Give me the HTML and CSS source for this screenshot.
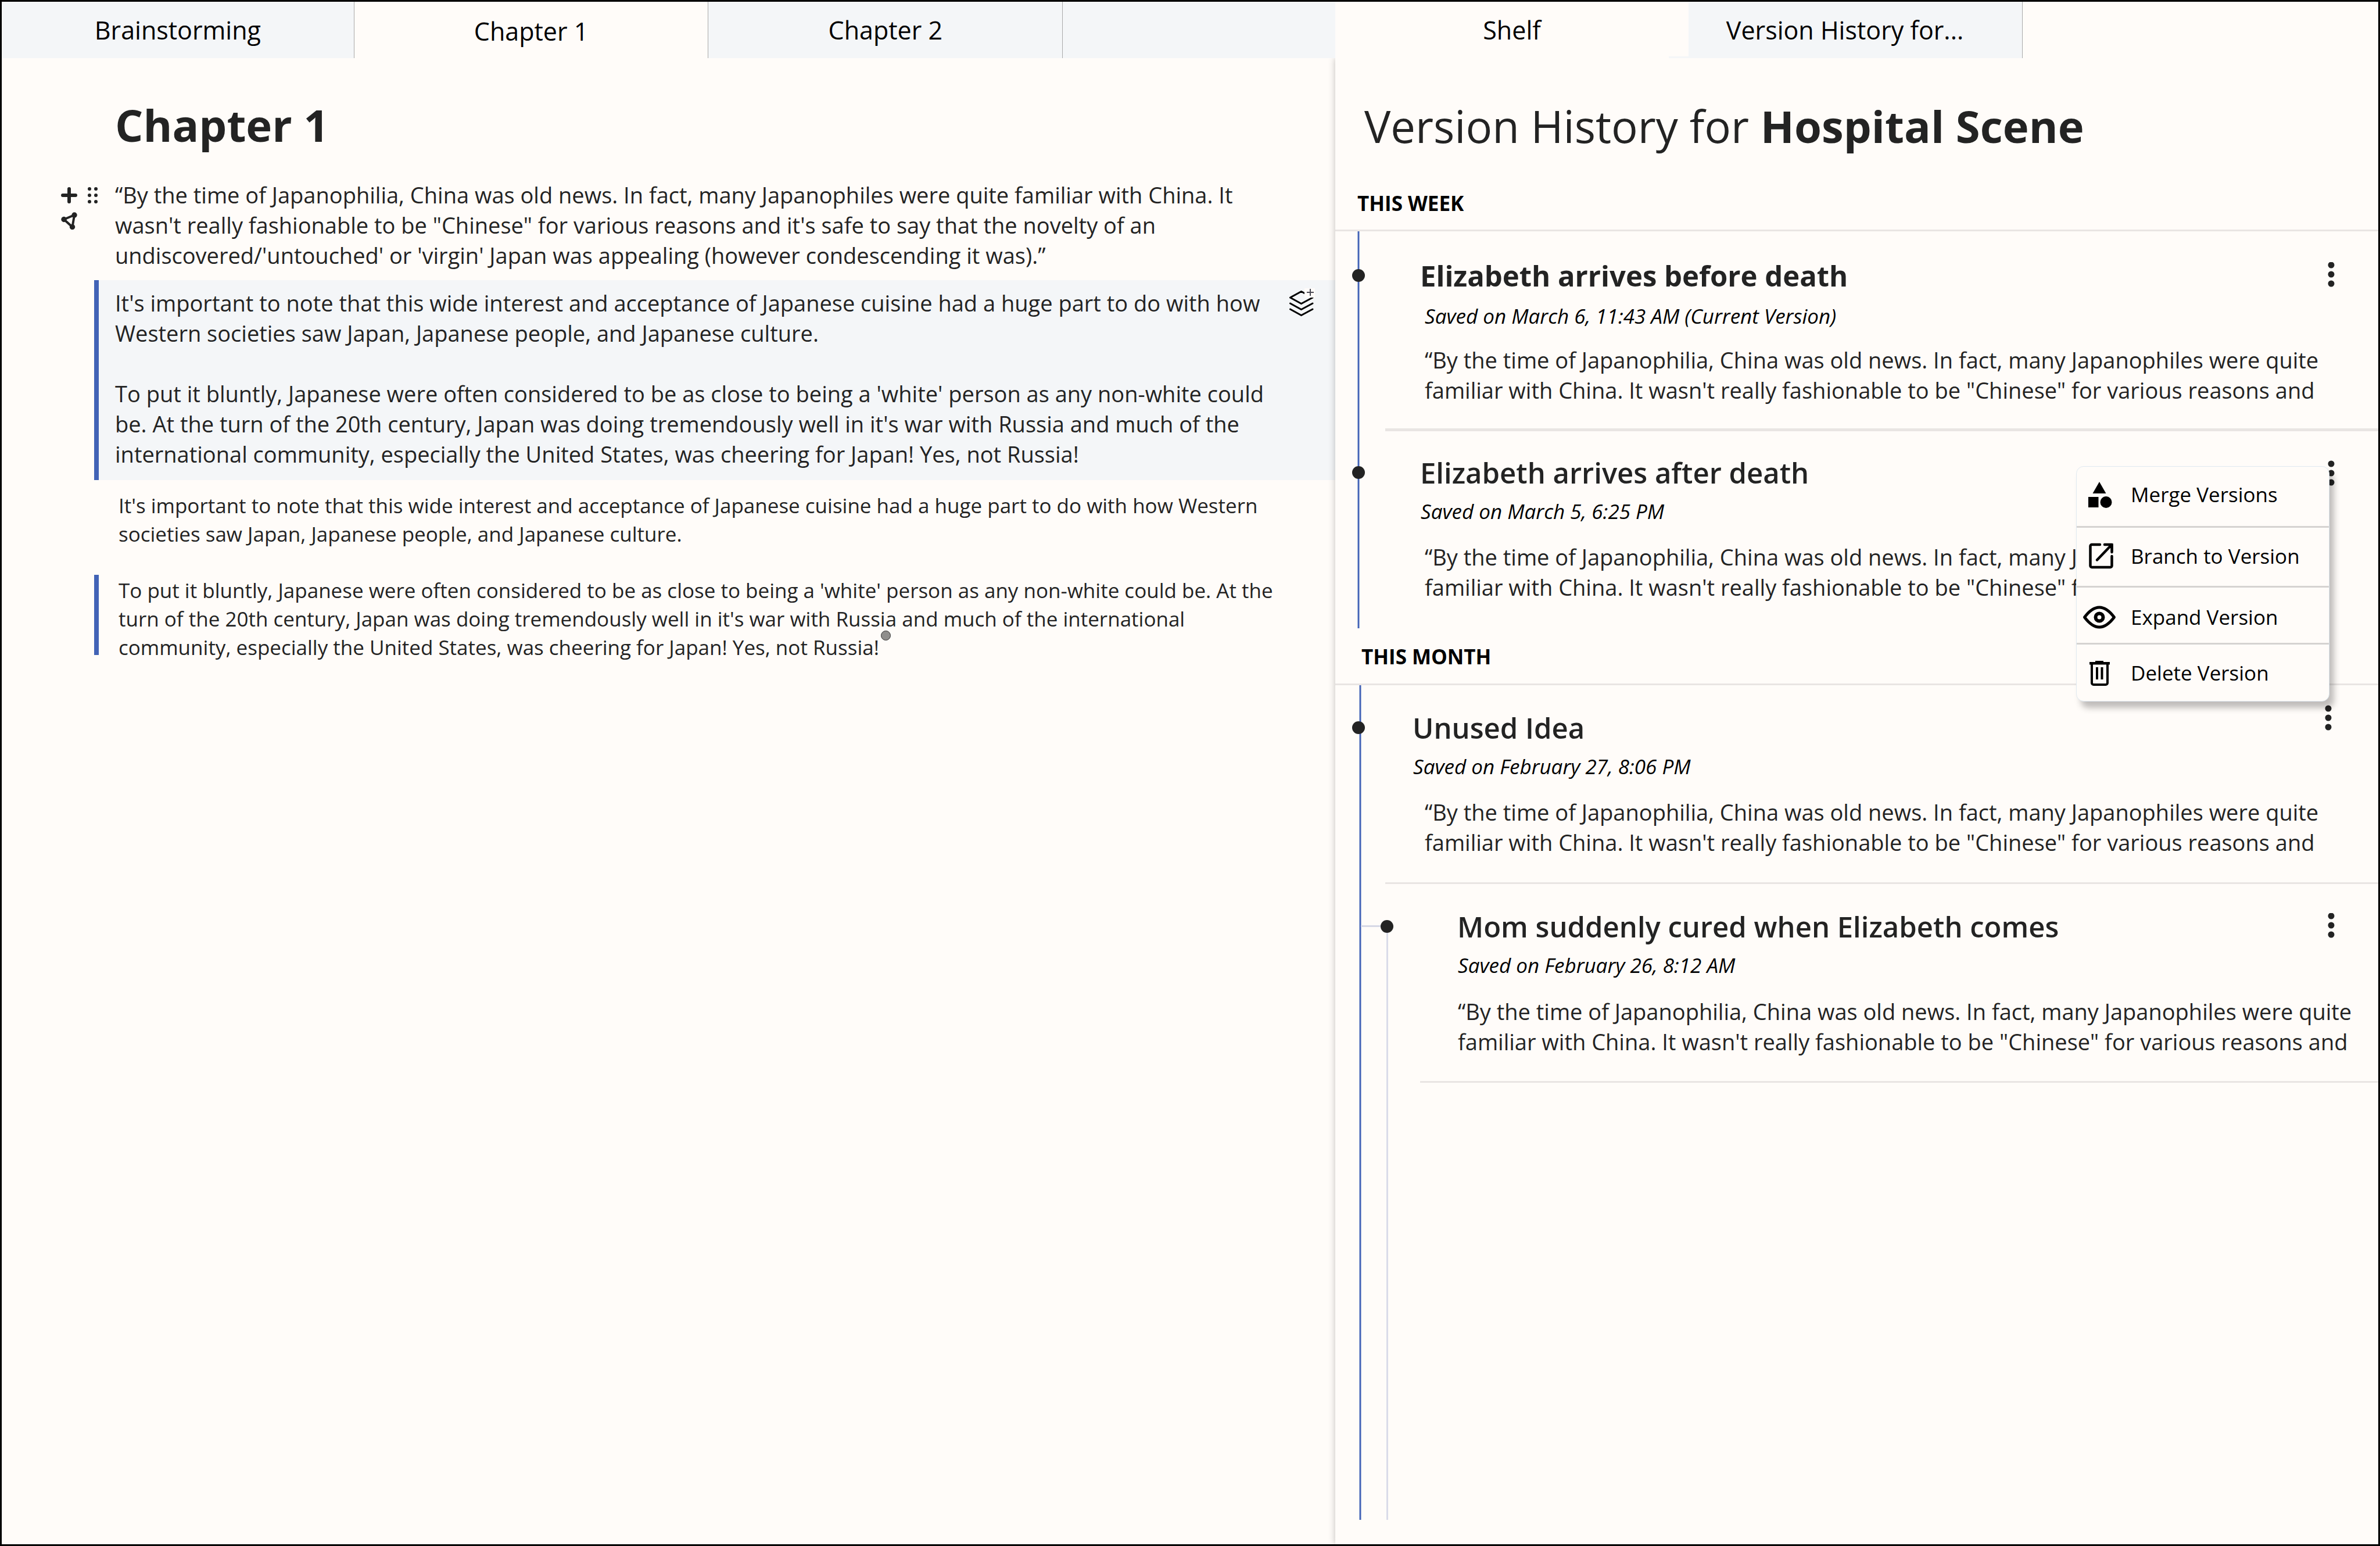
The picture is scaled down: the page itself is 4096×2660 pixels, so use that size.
FILE: index.html
```html
<!DOCTYPE html>
<html lang="en">
<head>
<meta charset="utf-8">
<meta name="viewport" content="width=device-width, initial-scale=1">
<title>Chapter 1</title>
<link rel="stylesheet" href="styles.css">
</head>
<body>
<div class="app">
  <main class="pane">
    <nav class="tabs" aria-label="Documents">
      <button class="tab tab-first" type="button">Brainstorming</button>
      <button class="tab tab-active" type="button">Chapter 1</button>
      <button class="tab" type="button">Chapter 2</button>
      <span class="tabs-rest"></span>
    </nav>
    <article class="editor">
      <h1 class="heading editor-heading">Chapter 1</h1>
      <div class="block">
        <div class="gutter">
          <div class="gutter-row">
            <button class="icon-button" type="button" aria-label="Add block">
              <svg width="28" height="28" viewBox="0 0 28 28"><path d="M14 3v22M3 14h22" stroke="#232323" stroke-width="6" stroke-linecap="round"/></svg>
            </button>
            <button class="icon-button" type="button" aria-label="Drag block">
              <svg width="18" height="28" viewBox="0 0 18 28" fill="#232323"><circle cx="3" cy="3" r="3"/><circle cx="14" cy="3" r="3"/><circle cx="3" cy="14" r="3"/><circle cx="14" cy="14" r="3"/><circle cx="3" cy="25" r="3"/><circle cx="14" cy="25" r="3"/></svg>
            </button>
          </div>
          <button class="icon-button" type="button" aria-label="Show branches">
            <svg width="28" height="30" viewBox="0 0 28 30" fill="#232323"><path d="M5 12.500 23 5 19.500 25.500Z" fill="none" stroke="#232323" stroke-width="4"/><circle cx="5" cy="12.500" r="4.700"/><circle cx="23" cy="5" r="4.700"/><circle cx="19.500" cy="25.500" r="4.700"/></svg>
          </button>
        </div>
        <p class="text">“By the time of Japanophilia, China was old news. In fact, many Japanophiles were quite familiar with China. It wasn't really fashionable to be "Chinese" for various reasons and it's safe to say that the novelty of an undiscovered/'untouched' or 'virgin' Japan was appealing (however condescending it was).”</p>
      </div>
      <section class="scene">
        <div>
          <p class="text">It's important to note that this wide interest and acceptance of Japanese cuisine had a huge part to do with how Western societies saw Japan, Japanese people, and Japanese culture.</p>
          <p class="text text-next">To put it bluntly, Japanese were often considered to be as close to being a 'white' person as any non-white could be. At the turn of the 20th century, Japan was doing tremendously well in it's war with Russia and much of the international community, especially the United States, was cheering for Japan! Yes, not Russia!</p>
        </div>
        <button class="icon-button scene-layers" type="button" aria-label="Add version">
          <svg width="46" height="50" viewBox="0 0 46 50"><g fill="none" stroke="#000" stroke-width="3" stroke-linecap="round" stroke-linejoin="round"><path d="M21.500 6.500 41 17 21.500 27.500 2.500 17Z"/><path d="M2.500 27 21.500 37.500 41 27M2.500 37 21.500 47.500 41 37"/></g><path d="M27 1h18v16H27z" fill="#fffcf9"/><path d="M37 2v12M31 8h12" stroke="#4a4a55" stroke-width="2"/></svg>
        </button>
      </section>
      <p class="note">It's important to note that this wide interest and acceptance of Japanese cuisine had a huge part to do with how Western societies saw Japan, Japanese people, and Japanese culture.</p>
      <p class="note note-marked">To put it bluntly, Japanese were often considered to be as close to being a 'white' person as any non-white could be. At the turn of the 20th century, Japan was doing tremendously well in it's war with Russia and much of the international community, especially the United States, was cheering for Japan! Yes, not Russia!<span class="note-dot"></span></p>
    </article>
  </main>

  <aside class="pane">
    <nav class="tabs" aria-label="Side panel">
      <button class="tab tab-shelf" type="button">Shelf</button>
      <button class="tab tab-history" type="button">Version History for...</button>
      <span class="tabs-rest tabs-rest-side"></span>
    </nav>
    <div class="history">
      <h2 class="heading history-heading">Version History for <b>Hospital Scene</b></h2>

      <h3 class="period">THIS WEEK</h3>
      <ol class="timeline">
        <li class="version version-current">
          <div class="version-head">
            <h4 class="version-title">Elizabeth arrives before death</h4>
            <button class="icon-button" type="button" aria-label="Version options"><svg width="12" height="46" viewBox="0 0 12 46" fill="#232323"><circle cx="6" cy="5" r="5.500"/><circle cx="6" cy="21" r="5.500"/><circle cx="6" cy="37" r="5.500"/></svg></button>
          </div>
          <p class="saved">Saved on March 6, 11:43 AM (Current Version)</p>
          <p class="text snippet">“By the time of Japanophilia, China was old news. In fact, many Japanophiles were quite familiar with China. It wasn't really fashionable to be "Chinese" for various reasons and</p>
        </li>
        <li class="version">
          <div class="version-head">
            <h4 class="version-title">Elizabeth arrives after death</h4>
            <button class="icon-button" type="button" aria-label="Version options"><svg width="12" height="46" viewBox="0 0 12 46" fill="#232323"><circle cx="6" cy="8" r="5.500"/><circle cx="6" cy="24" r="5.500"/><circle cx="6" cy="40" r="5.500"/></svg></button>
            <div class="menu">
              <button class="menu-item menu-merge" type="button">
                <svg class="menu-icon" width="60" height="50" viewBox="0 -3 60 50"><path d="M30 0 41.500 20H18.500zM11 26h17.500v18H11z"/><circle cx="41.500" cy="35" r="10"/></svg>
                Merge Versions
              </button>
              <button class="menu-item menu-branch" type="button">
                <svg class="menu-icon" width="60" height="50" viewBox="0 0 60 50"><g fill="none" stroke="#000" stroke-width="4.500" stroke-linecap="round" stroke-linejoin="round"><path d="M31 5H17a2.500 2.500 0 0 0-2.500 2.500v34A2.500 2.500 0 0 0 17 44h32a2.500 2.500 0 0 0 2.500-2.500V25"/><path d="M39 5h12.500v13"/><path d="M50 6.500 26 31.500"/></g><path d="M43 3h10.500v14z"/></svg>
                Branch to Version
              </button>
              <button class="menu-item menu-expand" type="button">
                <svg class="menu-icon" width="60" height="50" viewBox="0 0 60 50"><g fill="none" stroke="#000" stroke-width="5"><path d="M4.500 25C12 15 20 8 30 8S48 15 55.500 25C48 35 40 42 30 42S12 35 4.500 25Z" stroke-linejoin="round"/><circle cx="30" cy="25" r="6.500" stroke-width="6"/></g></svg>
                Expand Version
              </button>
              <button class="menu-item menu-delete" type="button">
                <svg class="menu-icon" width="60" height="50" viewBox="0 0 60 50"><g fill="none" stroke="#000" stroke-width="4"><path d="M17 8v34a3 3 0 0 0 3 3h21a3 3 0 0 0 3-3V8"/><path d="M26 15v21M34.500 15v21"/></g><path d="M13 6h10V4h14v2h11v4.500H13z"/></svg>
                Delete Version
              </button>
            </div>
          </div>
          <p class="saved">Saved on March 5, 6:25 PM</p>
          <p class="text snippet">“By the time of Japanophilia, China was old news. In fact, many Japanophiles were quite familiar with China. It wasn't really fashionable to be "Chinese" for various reasons and</p>
        </li>
      </ol>

      <h3 class="period period-month">THIS MONTH</h3>
      <ol class="timeline timeline-month">
        <li class="version version-unused">
          <div class="version-head">
            <h4 class="version-title">Unused Idea</h4>
            <button class="icon-button" type="button" aria-label="Version options"><svg width="12" height="46" viewBox="0 0 12 46" fill="#232323"><circle cx="6" cy="7" r="5.500"/><circle cx="6" cy="23" r="5.500"/><circle cx="6" cy="39" r="5.500"/></svg></button>
          </div>
          <p class="saved">Saved on February 27, 8:06 PM</p>
          <p class="text snippet">“By the time of Japanophilia, China was old news. In fact, many Japanophiles were quite familiar with China. It wasn't really fashionable to be "Chinese" for various reasons and</p>
        </li>
        <li class="version version-branch">
          <div class="version-head">
            <h4 class="version-title">Mom suddenly cured when Elizabeth comes</h4>
            <button class="icon-button" type="button" aria-label="Version options"><svg width="12" height="46" viewBox="0 0 12 46" fill="#232323"><circle cx="6" cy="5" r="5.500"/><circle cx="6" cy="21" r="5.500"/><circle cx="6" cy="37" r="5.500"/></svg></button>
          </div>
          <p class="saved">Saved on February 26, 8:12 AM</p>
          <p class="text snippet">“By the time of Japanophilia, China was old news. In fact, many Japanophiles were quite familiar with China. It wasn't really fashionable to be "Chinese" for various reasons and</p>
        </li>
      </ol>
    </div>
  </aside>
</div>
</body>
</html>
```
FILE: styles.css
```css
*,
*::before,
*::after {
  box-sizing: border-box;
}

body,
h1, h2, h3, h4, p, ol {
  margin: 0;
  padding: 0;
}

body {
  background: #fffcf9;
  color: #232323;
  font-family: "Open Sans", "Noto Sans", sans-serif;
}

button {
  padding: 0;
  border: 0;
  background: none;
  color: #000;
  font: inherit;
  cursor: pointer;
}

svg {
  display: block;
}

.app {
  display: grid;
  grid-template-columns: 2295fr 1795fr;
  min-height: 100vh;
  border: 3px solid #000;
}

.pane {
  display: flex;
  flex-direction: column;
  min-width: 0;
}

/* Tabs */

.tabs {
  display: flex;
  height: 97px;
}

.tab {
  position: relative;
  flex: 609 1 0;
  min-width: 0;
  border-right: 1px solid #a9a9a9;
  background: #f4f6f8;
  font-size: 43px;
  line-height: 58px;
}

.tab-first {
  flex-grow: 606;
}

.tab-active {
  padding-top: 4px;
  background: #fffcf9;
}

.tabs-rest {
  flex: 469 1 0;
  background: #f4f6f8;
}

.tab-shelf {
  flex-grow: 608;
  border-right: 0;
  background: #fffcf9;
}

.tab-history {
  flex-grow: 538;
  padding-right: 36px;
}

/* Lip that reaches under the neighbouring tab */
.tab-history::before {
  content: "";
  position: absolute;
  bottom: 0;
  left: -34px;
  width: 34px;
  height: 3px;
  background: #f4f6f8;
}

.tabs-rest-side {
  flex-grow: 612;
  background: #fffcf9;
}

/* Shared text */

.heading {
  font-size: 76px;
  line-height: 104px;
}

.text {
  font-size: 38px;
  line-height: 52px;
}

.icon-button {
  flex: none;
}

/* Editor */

.editor {
  padding-top: 63px;
}

.editor-heading {
  margin-left: 195px;
}

.block {
  display: grid;
  grid-template-columns: 195px 1fr;
  margin-top: 42px;
  padding-right: 98px;
}

.gutter {
  display: flex;
  flex-direction: column;
  align-items: flex-start;
  gap: 15px;
  padding: 13px 0 0 102px;
}

.gutter-row {
  display: flex;
  gap: 18px;
}

.scene {
  display: flex;
  justify-content: space-between;
  margin: 17px 0 0 159px;
  padding: 13px 34px 19px 28px;
  border-left: 8px solid #4263b6;
  background: #f4f6f8;
}

.scene > div {
  flex: 0 1 2000px;
}

.text-next {
  margin-top: 52px;
}

.scene-layers {
  align-self: flex-start;
}

.note {
  margin: 19px 84px 0 159px;
  padding-left: 42px;
  font-size: 35px;
  line-height: 49px;
}

.note-marked {
  position: relative;
  margin-top: 46px;
  padding-top: 2px;
}

.note-marked::before {
  content: "";
  position: absolute;
  top: 0;
  bottom: 11px;
  left: 0;
  width: 8px;
  background: #4263b6;
}

.note-dot {
  position: absolute;
  width: 17px;
  height: 17px;
  margin: -4px 0 0 3px;
  border: 1px solid #333;
  border-radius: 50%;
  background: #8f8e8c;
}

/* Version history */

.history {
  display: flex;
  flex: 1;
  flex-direction: column;
  padding: 65px 0 42px;
  box-shadow: 0 0 11px rgba(0, 0, 0, 0.25);
  clip-path: inset(0 0 0 -14px);
}

.history-heading {
  margin-left: 50px;
  font-weight: 400;
}

.period {
  margin-top: 57px;
  padding: 0 38px 21px;
  border-bottom: 3px solid #e9e5e3;
  color: #000;
  font-size: 35px;
  line-height: 48px;
}

.period-month {
  margin-top: 25px;
  padding: 0 45px 22px;
}

.timeline {
  position: relative;
  list-style: none;
}

.timeline::before {
  content: "";
  position: absolute;
  top: 0;
  bottom: 0;
  left: 38px;
  width: 4px;
  border: solid #a5b3da;
  border-width: 0 1px;
  background: #4263b6;
}

.timeline-month {
  flex: 1;
}

.timeline-month::before {
  left: 41px;
}

.version {
  position: relative;
  margin-left: 86px;
  padding: 38px 0 45px 60px;
}

.version-current {
  padding: 43px 0 40px 60px;
  border-bottom: 5px solid #e9e5e3;
}

.version-unused,
.version-branch {
  padding: 40px 0 43px 47px;
  border-bottom: 3px solid #e9e5e3;
}

.version-branch {
  margin-left: 146px;
  padding: 40px 0 42px 64px;
}

.version-head {
  position: relative;
  display: flex;
  align-items: center;
  justify-content: space-between;
  padding-right: 75px;
}

.version-unused .version-head {
  padding-right: 80px;
}

.version-unused .icon-button {
  align-self: flex-start;
  margin-top: -7px;
}

.version-title {
  font-size: 49px;
  font-weight: 600;
  line-height: 66px;
}

.version-current .version-title {
  font-weight: 700;
}

/* Timeline marker beside each title */
.version-head::before {
  content: "";
  position: absolute;
  top: 22px;
  left: -117px;
  width: 22px;
  height: 22px;
  border-radius: 50%;
  background: #232323;
}

.version-unused .version-head::before {
  left: -104px;
}

.version-branch .version-head::before {
  left: -132px;
  z-index: 1;
}

.saved {
  margin: 10px 0 0 1px;
  color: #000;
  font-size: 35px;
  font-style: italic;
  line-height: 48px;
}

.version-current .saved {
  margin: 13px 0 0 8px;
}

.snippet {
  margin: 28px 48px 0 8px;
}

.version-current .snippet {
  margin-top: 25px;
}

.version-unused .snippet {
  margin-left: 21px;
}

.version-branch .snippet {
  margin: 29px 20px 0 1px;
}

/* Side branch: elbow out of the main line, then down the panel */
.version-branch::before {
  content: "";
  position: absolute;
  top: 71px;
  left: -102px;
  width: 40px;
  height: 3px;
  background: #d6d8e6;
}

.timeline-month::after {
  content: "";
  position: absolute;
  top: 414px;
  bottom: 0;
  left: 88px;
  width: 3px;
  background: #dadce9;
}

/* Version menu */

.menu {
  position: absolute;
  top: 22px;
  right: 84px;
  z-index: 2;
  display: flex;
  flex-direction: column;
  width: 436px;
  border: 1px solid #e0e9f1;
  border-radius: 13px;
  background: #fffcf9;
  box-shadow: 8px 11px 11px rgba(0, 0, 0, 0.25);
}

.menu-item {
  display: flex;
  align-items: center;
  gap: 24px;
  height: 102px;
  padding-left: 9px;
  font-size: 35px;
  line-height: 48px;
}

.menu-item + .menu-item {
  border-top: 3px solid #d5d3d1;
}

.menu-merge {
  padding-bottom: 7px;
}

.menu-branch {
  height: 103px;
  padding-bottom: 2px;
}

.menu-expand {
  height: 98px;
  padding-top: 7px;
}

.menu-delete {
  height: 100px;
}
```
